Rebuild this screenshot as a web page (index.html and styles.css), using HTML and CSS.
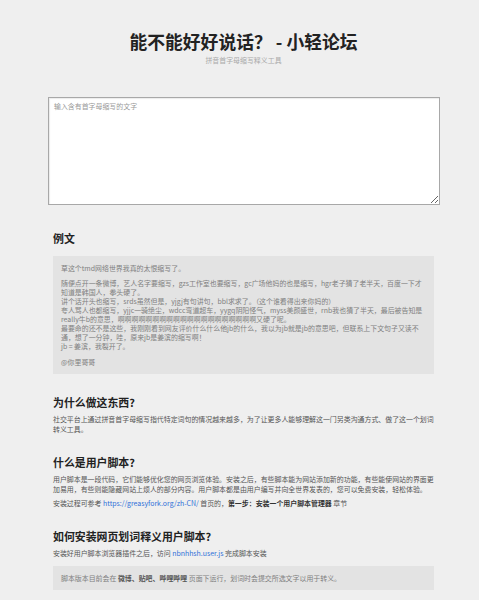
FILE: index.html
```html
<!DOCTYPE html>
<html lang="zh-CN">
<head>
<meta charset="utf-8">
<title>能不能好好说话？ - 小轻论坛</title>
<link rel="stylesheet" href="styles.css">
</head>
<body>
<div class="page">
  <header class="header">
    <h1 class="title">能不能好好说话？ - 小轻论坛</h1>
    <div class="subtitle">拼音首字母缩写释义工具</div>
  </header>

  <textarea class="input" placeholder="输入含有首字母缩写的文字"></textarea>

  <h2 class="heading heading-example">例文</h2>
  <div class="quote">
    <p>草这个tmd网络世界我真的太恨缩写了。</p>
    <p>随便点开一条微博，艺人名字要缩写，gzs工作室也要缩写，gc广场他妈的也是缩写，hgr老子猜了老半天，百度一下才知道是韩国人，拳头硬了。<br>讲个话开头也缩写，srds虽然但是，yjgj有句讲句，bbl求求了。（这个谁看得出来你妈的）<br>夸人骂人也都缩写，yjjc一骑绝尘，wdcc弯道超车，yygq阴阳怪气，myss美颜盛世，rnb我也猜了半天，最后被告知是really牛b的意思，啊啊啊啊啊啊啊啊啊啊啊啊啊啊啊啊啊啊啊啊又硬了呢。<br>最要命的还不是这些，我刚刚看到网友评价什么什么他jb的什么，我以为jb就是jb的意思吧，但联系上下文句子又读不通，想了一分钟，哇，原来jb是姜滨的缩写啊！<br>jb = 姜滨，我裂开了。</p>
    <p>@你里哥哥</p>
  </div>

  <h2 class="heading">为什么做这东西?</h2>
  <p class="text">社交平台上通过拼音首字母缩写指代特定词句的情况越来越多，为了让更多人能够理解这一门另类沟通方式、做了这一个划词转义工具。</p>

  <h2 class="heading">什么是用户脚本?</h2>
  <p class="text">用户脚本是一段代码，它们能够优化您的网页浏览体验。安装之后，有些脚本能为网站添加新的功能，有些能使网站的界面更加易用，有些则能隐藏网站上烦人的部分内容。用户脚本都是由用户编写并向全世界发表的，您可以免费安装，轻松体验。</p>
  <p class="text">安装过程可参考 <a class="link" href="#">https://greasyfork.org/zh-CN/</a> 首页的，<b class="strong">第一步：安装一个用户脚本管理器</b> 章节</p>

  <h2 class="heading">如何安装网页划词释义用户脚本?</h2>
  <p class="text">安装好用户脚本浏览器插件之后，访问 <a class="link" href="#">nbnhhsh.user.js</a> 完成脚本安装</p>
  <div class="note">脚本版本目前会在 <b class="note-strong">微博、贴吧、哔哩哔哩</b> 页面下运行，划词时会提交所选文字以用于转义。</div>
</div>
</body>
</html>
```

FILE: styles.css
```css
html, body {
  margin: 0;
  padding: 0;
}

body {
  background: #efefef;
  font-family: "Noto Sans CJK SC", "Noto Sans", sans-serif;
  color: #555;
}

.page {
  width: 381px;
  margin: 0 auto;
  padding-left: 8px;
}

.header {
  padding-top: 29px;
  text-align: center;
}

.title {
  margin: 0;
  font-size: 17.8px;
  line-height: 24px;
  font-weight: 700;
  color: #222;
}

.subtitle {
  margin-top: 2px;
  font-size: 6.93px;
  line-height: 10px;
  color: #aaa;
}

.input {
  display: block;
  box-sizing: border-box;
  width: 392px;
  height: 108px;
  margin: 32px -6px 0 -5px;
  padding: 4px 5px;
  border: 1px solid #a8a8a8;
  box-shadow: inset 1px 1px 1px rgba(0, 0, 0, 0.08);
  background: #fff;
  font-family: "Noto Sans CJK SC", "Noto Sans", sans-serif;
  font-size: 6.93px;
  line-height: 9px;
  color: #333;
  resize: vertical;
}

.input::placeholder {
  color: #999;
}

.heading {
  margin: 21px 0 5px;
  font-size: 10.9px;
  line-height: 14px;
  font-weight: 700;
  color: #222;
}

.heading-example {
  margin: 26px 0 11px;
}

.quote {
  background: #e3e3e3;
  padding: 7.5px 8px;
  font-size: 6.93px;
  line-height: 9px;
  color: #808080;
}

.quote p {
  margin: 0 0 6.5px;
}

.quote p:last-child {
  margin-bottom: 0;
}

.text {
  margin: 0;
  font-size: 6.93px;
  line-height: 10px;
  color: #555;
}

.text + .text {
  margin-top: 4px;
}

.link {
  color: #2f6fd8;
  text-decoration: none;
}

.strong {
  color: #333;
  font-weight: 700;
}

.note {
  margin-top: 8px;
  background: #e3e3e3;
  padding: 7.5px 8px;
  font-size: 6.93px;
  line-height: 9px;
  color: #808080;
}

.note-strong {
  color: #555;
  font-weight: 700;
}
```
